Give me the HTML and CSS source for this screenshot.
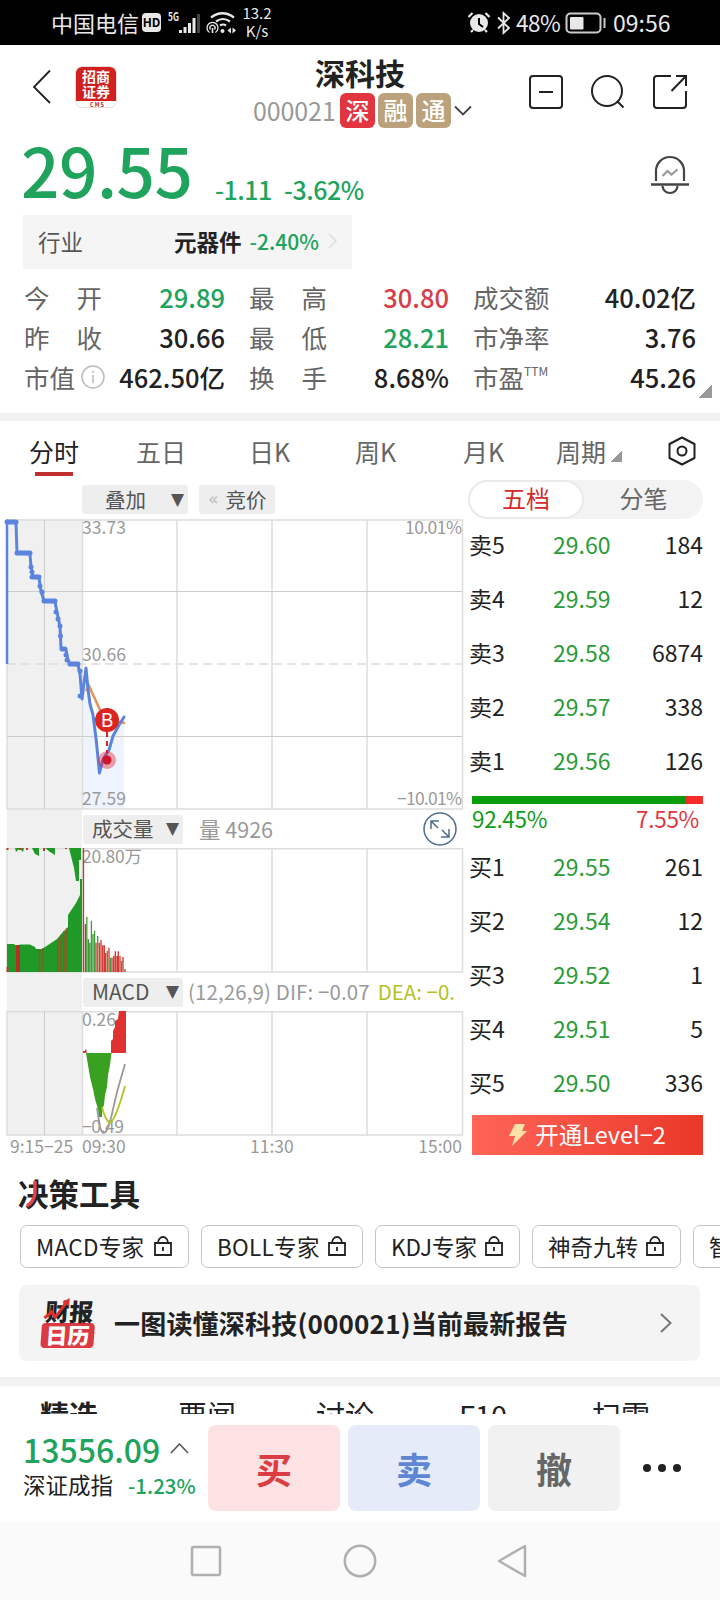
FILE: index.html
```html
<!DOCTYPE html>
<html lang="zh-CN">

<head>
  <meta charset="UTF-8">
  <meta name="viewport" content="width=device-width, initial-scale=1.0">
  <title>深科技 000021</title>
  <link rel="stylesheet" href="styles.css">
</head>

<body>
  <div class="status">
    <span class="carrier">中国电信</span>
    <span class="hd">HD</span>
    <svg class="signal" width="34" height="24" viewBox="0 0 34 24">
      <text x="0" y="10" font-size="11" font-weight="bold" fill="#e8e8e8" textLength="11" lengthAdjust="spacingAndGlyphs">5G</text>
      <g fill="#e8e8e8">
        <rect x="11" y="19" width="3" height="3" />
        <rect x="15.500" y="16" width="3" height="6" />
        <rect x="20" y="12" width="3" height="10" />
        <rect x="24.500" y="7" width="3" height="15" />
        <rect x="29" y="3" width="3" height="19" fill="#444" />
      </g>
    </svg>
    <svg class="wifi" width="31" height="24" viewBox="0 0 31 24" fill="none" stroke="#e8e8e8" stroke-width="2.200">
      <path d="M5 6.500Q16.500 -2 28 6.500" />
      <path d="M10 10.500Q17 5.500 24 10.500" />
      <path d="M14 14.500Q17 12.500 20 14.500" />
      <circle cx="16.500" cy="20" r="2" fill="#e8e8e8" stroke="none" />
      <path stroke-width="1.300" d="M3.500 21.500A5.500 5.500 0 1 1 9.500 21.500M4.500 18.500A2.600 2.600 0 1 1 8.500 18.500" />
      <path d="M6.500 17v5" stroke-width="1.600" />
      <path fill="#e8e8e8" stroke="none" d="M21.500 19.500l3.500-3v6zM30 19.500l-3.500-3v6z" />
    </svg>
    <span class="speed">13.2<br>K/s</span>
    <svg class="alarm" width="24" height="24" viewBox="0 0 24 24">
      <circle cx="12" cy="12" r="9" fill="#e8e8e8" />
      <path d="M12 7v6l4 3" fill="none" stroke="#000" stroke-width="2" />
      <path d="M1.500 6l4-4M22.500 6l-4-4M4 21l2-2M20 21l-2-2" stroke="#e8e8e8" stroke-width="2.200" />
    </svg>
    <svg class="bluetooth" width="14" height="24" viewBox="0 0 14 24" fill="none" stroke="#e8e8e8" stroke-width="1.800">
      <path d="M1 6.500l11 10.500-5.500 5V2l5.500 5L1 17.500" />
    </svg>
    <span class="percent">48%</span>
    <svg class="battery" width="42" height="24" viewBox="0 0 42 24">
      <rect x="1.500" y="2.500" width="34" height="19" rx="4" fill="none" stroke="#ccc" stroke-width="2" />
      <rect x="5" y="6" width="13.500" height="12.500" rx="1" fill="#e8e8e8" />
      <rect x="38.500" y="7" width="2" height="10" fill="#ccc" />
    </svg>
    <span class="clock">09:56</span>
  </div>

  <div class="header">
    <div class="header-left">
      <svg width="20" height="36" viewBox="0 0 20 36" fill="none" stroke="#222" stroke-width="1.800">
        <path d="M18 1.500L2 18l16 16" />
      </svg>
      <div class="logo">
        <div class="logo-name">招商<br>证券</div>
        <svg width="42" height="7" viewBox="0 0 42 7">
          <text x="14" y="5.500" font-size="5.500" font-weight="bold" fill="#c22" textLength="14">CMS</text>
        </svg>
      </div>
    </div>
    <div class="header-title">
      <h1>深科技</h1>
      <div class="code">
        <span>000021</span>
        <i class="tag red-tag">深</i>
        <i class="tag">融</i>
        <i class="tag">通</i>
        <svg width="18" height="12" viewBox="0 0 18 12" fill="none" stroke="#444" stroke-width="1.800">
          <path d="M1 1.500l8 8 8-8" />
        </svg>
      </div>
    </div>
    <div class="header-icons">
      <svg width="36" height="36" viewBox="0 0 36 36" fill="none" stroke="#222" stroke-width="2">
        <rect x="2" y="2" width="32" height="32" rx="3" />
        <path d="M11 18h14" />
      </svg>
      <svg width="36" height="36" viewBox="0 0 36 36" fill="none" stroke="#222" stroke-width="2">
        <circle cx="17" cy="17" r="15" />
        <path d="M27 27l6.500 6.500" />
      </svg>
      <svg width="36" height="36" viewBox="0 0 36 36" fill="none" stroke="#222" stroke-width="2">
        <path d="M19 2H5a3 3 0 0 0-3 3v26a3 3 0 0 0 3 3h26a3 3 0 0 0 3-3V17" />
        <path d="M24 2h10v10M34 2L19.500 17" />
      </svg>
    </div>
  </div>

  <div class="price">
    <span class="now">29.55</span>
    <span class="change">-1.11</span>
    <span class="change">-3.62%</span>
    <svg class="bell" width="40" height="40" viewBox="0 0 40 40" fill="none" stroke="#444" stroke-width="2.200">
      <path d="M6 26V16a14 14 0 0 1 28 0v10" />
      <path d="M1 29.500h38" stroke-width="2.600" />
      <path d="M12.500 31a7.500 7 0 0 0 15 0" />
      <path d="M12.500 21l5-5 4 3.500 6-5" stroke="#999" />
    </svg>
  </div>

  <div class="industry">
    <span>行业</span>
    <b>元器件</b>
    <span class="green">-2.40%</span>
    <svg width="9" height="16" viewBox="0 0 9 16" fill="none" stroke="#ddd" stroke-width="1.500">
      <path d="M1 1l7 7-7 7" />
    </svg>
  </div>

  <div class="quotes">
    <div class="label"><span>今</span><span>开</span></div>
    <div class="value green">29.89</div>
    <div class="label"><span>最</span><span>高</span></div>
    <div class="value red">30.80</div>
    <div class="label">成交额</div>
    <div class="value">40.02亿</div>
    <div class="label"><span>昨</span><span>收</span></div>
    <div class="value">30.66</div>
    <div class="label"><span>最</span><span>低</span></div>
    <div class="value green">28.21</div>
    <div class="label">市净率</div>
    <div class="value">3.76</div>
    <div class="label">市值
      <svg width="24" height="24" viewBox="0 0 24 24" fill="none" stroke="#bbb" stroke-width="1.500">
        <circle cx="12" cy="12" r="11" />
        <path d="M12 10v8M12 6v2" />
      </svg>
    </div>
    <div class="value">462.50亿</div>
    <div class="label"><span>换</span><span>手</span></div>
    <div class="value">8.68%</div>
    <div class="label ttm">市盈<sup>TTM</sup></div>
    <div class="value">45.26</div>
    <div class="corner"></div>
  </div>

  <div class="tabs">
    <span class="tab active">分时</span>
    <span class="tab">五日</span>
    <span class="tab">日K</span>
    <span class="tab">周K</span>
    <span class="tab">月K</span>
    <span class="tab">周期<i class="tri"></i></span>
    <svg width="30" height="30" viewBox="0 0 30 30" fill="none" stroke="#222" stroke-width="2">
      <path d="M15 1.500l12.500 6.500v14L15 28.500 2.500 22V8z" stroke-linejoin="round" />
      <circle cx="15" cy="15" r="4.500" />
    </svg>
  </div>

  <div class="main">
    <div class="charts">
      <div class="chart-tools">
        <div class="chip overlay">叠加 <i>▼</i></div>
        <div class="chip auction"><i>«</i>竞价</div>
      </div>

      <svg class="chart" width="468" height="291" viewBox="0 0 468 291">
        <rect x="7" y="0" width="75" height="291" fill="#f0f0f0" />
        <path d="M82 180L86 149 90 185 96 219 99.500 254 109 229 113 217 124 198V290H82z" fill="#eef3fd" />
        <g fill="none" stroke="#ddd" stroke-width="1.500">
          <path d="M7 1H462.500V290H7z" />
          <path d="M82.500 1V290M177 1V290M272 1V290M367 1V290" />
          <path d="M44.500 1V290M7 72.500H462M7 217.500H462" stroke="#ccc" stroke-width="1" />
          <path d="M7 145H462" stroke-dasharray="9 5" />
        </g>
        <g class="axis">
          <text x="82" y="15" textLength="44">33.73</text>
          <text x="462" y="15" text-anchor="end" textLength="57">10.01%</text>
          <text x="82" y="142" textLength="44">30.66</text>
          <text x="82" y="286" textLength="44">27.59</text>
          <text x="462" y="286" text-anchor="end" textLength="65">−10.01%</text>
        </g>
        <path d="M86 172L89 167 101 193 113 202 125 204" fill="none" stroke="#e0935a" stroke-width="2.500" />
        <g fill="none" stroke="#5b84dc" stroke-linejoin="round" stroke-linecap="round">
          <path d="M7 1V145" stroke-width="2.500" stroke-linecap="butt" />
          <path d="M7 2L16 4 17 34 30 35 31 48 33 58 39 59 41 72 44 82 55 83 57 93 60 108 61 129 66 131 68 141 70 145 78 146 80 155 82 180 86 149 88 170 90 185 93 196 96 219 99.500 254 103 240 109 231 113 217 119 206 124 198" stroke-width="3" />
          <path d="M7 3H16M17 34H30M32 58H39M44 82H55M62 130H65M70 145H78" stroke-width="5" />
          <path d="M31 48v.1M32 53v.1M40 67v.1M42 73v.1M56 93v.1M58 100v.1M60 107v.1M60.500 117v.1M66 136v.1M67 141v.1M80 152v.1M80 177v.1" stroke-width="5" />
        </g>
        <path d="M107 213V234" stroke="#d22" stroke-width="2" stroke-dasharray="5 4" />
        <circle cx="107" cy="241" r="9" fill="#e0182d" opacity=".4" />
        <circle cx="107" cy="241" r="4.500" fill="#d0142c" />
        <circle cx="107" cy="201" r="12" fill="#dc2420" />
        <text class="buy-mark" x="107" y="208" text-anchor="middle">B</text>
      </svg>

      <div class="chart-head">
        <div class="chip">成交量 <i>▼</i></div>
        <span class="volume">量 4926</span>
        <svg width="34" height="34" viewBox="0 0 34 34" fill="none" stroke="#4d6d8c" stroke-width="1.500">
          <circle cx="17" cy="17" r="16" />
          <path d="M8 17V9h8M8 9l7 7M26 17v8h-8M26 25l-7-7" />
        </svg>
      </div>

      <svg class="chart" width="468" height="125" viewBox="0 0 468 125">
        <rect x="7" y="0" width="75" height="125" fill="#f0f0f0" />
        <g fill="none" stroke="#ddd" stroke-width="1.500">
          <path d="M7 .7H462.500V124H7z" />
          <path d="M82.500 0V124M177 0V124M272 0V124M367 0V124" />
          <path d="M44.500 0V124" stroke="#ccc" stroke-width="1" />
        </g>
        <text class="axis" x="82" y="15" textLength="60">20.80万</text>
        <path fill="#1f9928" d="M7 124V96H14L15 97H19L20 96.500H30L35 99 36 101H42L48 97 57 91 62 85 68 79V67L72 61 76 55 80 47V31H82V124z" />
        <path fill="#1f9928" d="M7 0H15L16 4 18 2 20 1 23 4 24 0H32L35 6 39 8V0H45L50 4 55 7V0H69L71 8 74 20 76 33H79V12H81V0z" />
        <path stroke="#b33024" d="M18 97V124" stroke-width="4" />
        <path stroke="#8a5a22" d="M39.500 101V124M43 100V124M58 91V124M61 87V124M64 83V124M67 80V124" stroke-width="1.500" />
        <path stroke="#c23a2c" d="M7.500 0V2M20 0V2M27 0V2M44 0V3M66 0V1M7.500 119V124" stroke-width="2" />
        <path stroke="#d8302c" stroke-width="1.300" d="M83.500 0V124M85.400 76V124M96 94.700V124M99.300 94.700V124M101 92V124M102.700 97.300V124M104.300 97.300V124M105.700 105V124M109 99.700V124M112 109.700V124M113.700 107.700V124M115.300 103.300V124M117 108V124M118.300 103.300V124M120 108V124M123 109V124M125 121V124" />
        <path stroke="#3a9c3a" stroke-width="1.300" d="M86.800 69V124M88.400 91V124M89.800 94.700V124M91.400 72.700V124M93 86V124M94.600 82.700V124M97.700 88V124M107.300 102.700V124M110.500 109.700V124M121.600 112.700V124" />
      </svg>

      <div class="chart-head">
        <div class="chip macd">MACD <i>▼</i></div>
        <span class="params">(12,26,9) DIF: −0.07</span>
        <span class="dea">DEA: −0.</span>
      </div>

      <svg class="chart" width="468" height="125" viewBox="0 0 468 125">
        <rect x="7" y="0" width="75" height="124" fill="#f0f0f0" />
        <g fill="none" stroke="#ddd" stroke-width="1.500">
          <path d="M7 .7H462.500V124H7z" />
          <path d="M82.500 0V124M177 0V124M272 0V124M367 0V124" />
          <path d="M44.500 0V124" stroke="#ccc" stroke-width="1" />
        </g>
        <g class="axis">
          <text x="82" y="15" textLength="34">0.26</text>
          <text x="82" y="122" textLength="42">−0.49</text>
        </g>
        <path fill="#3aa021" d="M86 42H111.500L110 54 108 64 107 76 105 84 104 94 102 98V106H99L98 98 95 88 93 78 90 66 88 54z" />
        <path fill="#e03030" d="M83 42V40H85V38.500H86.500V42zM111 42V30L113 28V20L115 16V10L118 8 119 0H126V42z" />
        <path fill="none" stroke="#999" stroke-width="1.800" d="M97 97L100 116Q103 127 108 117L111 107 117 81 125 53" />
        <path fill="none" stroke="#b4c31e" stroke-width="1.800" d="M102 96Q105 109 110 112 116 108 125 75" />
      </svg>

      <div class="times">
        <span>9:15−25</span>
        <span>09:30</span>
        <span>11:30</span>
        <span>15:00</span>
      </div>
    </div>

    <div class="book">
      <div class="switch">
        <span class="on">五档</span>
        <span>分笔</span>
      </div>
      <div class="levels">
        <div class="level"><span>卖5</span><span>29.60</span><span>184</span></div>
        <div class="level"><span>卖4</span><span>29.59</span><span>12</span></div>
        <div class="level"><span>卖3</span><span>29.58</span><span>6874</span></div>
        <div class="level"><span>卖2</span><span>29.57</span><span>338</span></div>
        <div class="level"><span>卖1</span><span>29.56</span><span>126</span></div>
      </div>
      <div class="ratio"><div style="width: 92.45%"></div></div>
      <div class="ratio-text"><span>92.45%</span><span>7.55%</span></div>
      <div class="levels">
        <div class="level"><span>买1</span><span>29.55</span><span>261</span></div>
        <div class="level"><span>买2</span><span>29.54</span><span>12</span></div>
        <div class="level"><span>买3</span><span>29.52</span><span>1</span></div>
        <div class="level"><span>买4</span><span>29.51</span><span>5</span></div>
        <div class="level"><span>买5</span><span>29.50</span><span>336</span></div>
      </div>
      <div class="level2">
        <svg width="18" height="22" viewBox="0 0 18 22">
          <path fill="#ffe0a8" d="M6 0H16L13 7H18L3 22 6 12H0z" />
        </svg>
        开通Level−2
      </div>
    </div>
  </div>

  <h2>决策工具
    <svg width="14" height="30" viewBox="0 0 14 30" fill="none" stroke="#e0404a" stroke-width="3.500">
      <path d="M10 3V15Q9 24 2 28" />
    </svg>
  </h2>

  <div class="tools">
    <div class="tool macd-tool">MACD专家 <svg class="lock" viewBox="0 0 18 20"><path d="M1 7h16v12H1zM4 7a5 6 0 0 1 10 0M9 11v4" /></svg></div>
    <div class="tool boll-tool">BOLL专家 <svg class="lock" viewBox="0 0 18 20"><path d="M1 7h16v12H1zM4 7a5 6 0 0 1 10 0M9 11v4" /></svg></div>
    <div class="tool kdj-tool">KDJ专家 <svg class="lock" viewBox="0 0 18 20"><path d="M1 7h16v12H1zM4 7a5 6 0 0 1 10 0M9 11v4" /></svg></div>
    <div class="tool nine-tool">神奇九转 <svg class="lock" viewBox="0 0 18 20"><path d="M1 7h16v12H1zM4 7a5 6 0 0 1 10 0M9 11v4" /></svg></div>
    <div class="tool">智能</div>
  </div>

  <div class="report">
    <div class="report-logo">
      <div>财报</div>
      <div class="calendar">日历</div>
      <svg width="28" height="24" viewBox="0 0 28 24" fill="none" stroke="#e0302e" stroke-width="3">
        <path d="M1 20L8 14 12 19 23 3" />
        <path d="M18 4l7-4v8z" fill="#e0302e" stroke="none" />
      </svg>
    </div>
    <b>一图读懂深科技(000021)当前最新报告</b>
    <svg width="12" height="20" viewBox="0 0 12 20" fill="none" stroke="#777" stroke-width="2">
      <path d="M1 1l9.500 9L1 19" />
    </svg>
  </div>

  <div class="news">
    <span class="active">精选</span>
    <span>要闻</span>
    <span>讨论</span>
    <span>F10</span>
    <span>扫雷</span>
  </div>

  <div class="trade">
    <div class="index">
      <div class="index-value">13556.09
        <svg width="19" height="11" viewBox="0 0 19 11" fill="none" stroke="#555" stroke-width="1.600">
          <path d="M1 10l8.500-9 8.500 9" />
        </svg>
      </div>
      <div class="index-name">深证成指<span>-1.23%</span></div>
    </div>
    <div class="btn buy">买</div>
    <div class="btn sell">卖</div>
    <div class="btn cancel">撤</div>
    <div class="more"><i></i><i></i><i></i></div>
  </div>

  <div class="nav">
    <svg width="34" height="34" viewBox="0 0 34 34"><rect x="3" y="3" width="28" height="28" rx="1.500" /></svg>
    <svg width="34" height="34" viewBox="0 0 34 34"><circle cx="17" cy="17" r="15.200" /></svg>
    <svg width="34" height="34" viewBox="0 0 34 34"><path d="M2 17L28 2V32z" stroke-linejoin="round" /></svg>
  </div>
</body>

</html>
```
FILE: styles.css
```css
* {
  box-sizing: border-box;
}

body {
  margin: 0;
  width: 720px;
  height: 1600px;
  overflow: hidden;
  background-color: #fff;
  color: #222;
  font-family: "Noto Sans CJK SC", sans-serif;
  line-height: 1;
}

i {
  font-style: normal;
}

svg {
  display: block;
  flex: none;
}

.green {
  color: #20a35c;
}

.red {
  color: #d5404a;
}

/* status bar */
.status {
  display: flex;
  align-items: center;
  height: 45px;
  padding: 0 0 0 51px;
  background-color: #000;
  color: #e8e8e8;
  white-space: nowrap;
}

.carrier {
  width: 91px;
  padding-bottom: 1px;
  font-size: 22px;
}

.hd {
  width: 19px;
  height: 19px;
  margin-right: 7px;
  border-radius: 4px;
  background-color: #e8e8e8;
  color: #000;
  font-size: 12px;
  font-weight: bold;
  line-height: 18px;
  text-align: center;
}

.wifi {
  margin-left: 4px;
}

.speed {
  width: 40px;
  margin-right: 190px;
  padding-bottom: 1px;
  font-size: 15px;
  line-height: 18px;
  text-align: center;
}

.bluetooth {
  margin: 0 5px 0 6px;
}

.percent {
  width: 49px;
  padding-bottom: 1px;
  font-size: 22.500px;
  letter-spacing: -0.5px;
}

.clock {
  margin-left: 6px;
  padding-bottom: 1px;
  font-size: 23px;
}

/* title row */
.header {
  display: grid;
  grid-template-columns: 240px 240px 1fr;
  height: 95px;
}

.header-left {
  display: flex;
  align-items: flex-start;
  gap: 23px;
  padding: 24px 0 0 32px;
}

.logo {
  width: 42px;
  height: 42px;
  margin-top: -3px;
  border: 1px solid #eadada;
  border-radius: 7px;
  overflow: hidden;
}

.logo-name {
  height: 34px;
  padding-top: 2px;
  background-color: #d0201f;
  color: #fff;
  font-size: 14px;
  font-weight: bold;
  line-height: 15px;
  text-align: center;
}

h1 {
  margin: 12px 0 6px;
  font-size: 30px;
  line-height: 30px;
  text-align: center;
}

.code {
  display: flex;
  align-items: center;
  gap: 3px;
  margin-left: 13px;
  color: #999;
  font-size: 25px;
}

.code span {
  width: 84px;
  letter-spacing: -0.1px;
}

.tag {
  width: 35px;
  height: 35px;
  border-radius: 6px;
  background-color: #bba27c;
  color: #fff;
  font-size: 24px;
  font-weight: 500;
  line-height: 34px;
  text-align: center;
}

.red-tag {
  background-color: #e23540;
}

.header-icons {
  display: flex;
  gap: 26px;
  padding: 29px 0 0 48px;
}

/* price */
.price {
  display: flex;
  align-items: flex-end;
  height: 65px;
  padding-left: 21px;
  color: #20a35c;
}

.now {
  width: 194px;
  padding-bottom: 3px;
  font-size: 67.500px;
  font-weight: 500;
  letter-spacing: -0.5px;
  line-height: 67px;
}

.change {
  width: 69px;
  font-size: 25px;
  font-weight: 500;
  letter-spacing: -0.5px;
  line-height: 31px;
}

.bell {
  margin: 0 0 10px 297px;
}

.industry {
  display: flex;
  align-items: center;
  width: 329px;
  height: 54px;
  margin: 10px 0 0 23px;
  padding: 0 15px 2px;
  background-color: #f5f5f5;
  color: #555;
  font-size: 22.500px;
}

.industry b {
  margin: 0 8px 0 auto;
  color: #222;
}

.industry .green {
  margin-right: 9px;
  font-size: 21px;
  font-weight: 500;
}

.quotes {
  position: relative;
  display: grid;
  grid-template-columns: 78px 123px 102px 122px 114px 133px;
  grid-auto-rows: 40px;
  align-items: center;
  height: 144px;
  padding: 8px 0 0 24px;
  font-size: 25.500px;
  white-space: nowrap;
}

.label {
  display: flex;
  justify-content: space-between;
  align-items: center;
  color: #666;
}

.label:nth-child(6n + 3),
.label:nth-child(6n + 5) {
  padding-left: 24px;
}

.label svg {
  margin-right: -3px;
}

.label.ttm {
  justify-content: flex-start;
}

.ttm sup {
  align-self: flex-start;
  margin-top: 1px;
  font-size: 12px;
}

.value {
  font-weight: 500;
  text-align: right;
}

.corner {
  position: absolute;
  right: 8px;
  bottom: 15px;
  width: 13px;
  height: 13px;
  background: linear-gradient(135deg, transparent 50%, #999 50%);
}

/* period tabs */
.tabs {
  display: grid;
  grid-template-columns: 107px 113px 106px 108px 93px 111px 1fr;
  height: 72px;
  padding: 13px 0 0 29px;
  border-top: 8px solid #f2f2f2;
  color: #666;
  font-size: 25px;
  line-height: 34px;
}

.tabs svg {
  margin-top: 2px;
}

.tab.active {
  color: #222;
}

.tab.active::after {
  content: "";
  display: block;
  width: 38px;
  height: 4px;
  margin: 4px 0 0 6px;
  background-color: #c02e2e;
}

.tri {
  display: inline-block;
  width: 11px;
  height: 11px;
  margin-left: 5px;
  background: linear-gradient(135deg, transparent 50%, #999 50%);
}

/* charts */
.main {
  display: flex;
  height: 676px;
}

.charts {
  width: 468px;
  font-size: 20px;
}

.chart-tools {
  display: flex;
  gap: 11px;
  height: 34px;
  padding-left: 82px;
}

.chip {
  display: flex;
  align-items: center;
  width: 100px;
  height: 29px;
  padding: 0 0 1px 9px;
  border-radius: 3px;
  background-color: #eee;
  color: #555;
  font-size: 20.500px;
}

.chip i {
  margin-left: auto;
  margin-right: 4px;
  font-family: "DejaVu Sans", sans-serif;
  font-size: 17px;
}

.macd {
  font-size: 21px;
}

.chip.overlay {
  width: 106px;
  padding-left: 23px;
}

.chip.auction {
  width: 76px;
}

.chip.auction i {
  margin: 0 7px 0 0;
  color: #bbb;
}

.axis {
  fill: #999;
  font-size: 17.500px;
}

.buy-mark {
  fill: #fff;
  font-size: 19px;
}

.chart-head {
  display: flex;
  align-items: center;
  height: 38px;
  padding: 0 11px 0 83px;
  background: linear-gradient(to right, #fff 7px, #f0f0f0 7px, #f0f0f0 82px, #fff 82px);
  color: #999;
  white-space: nowrap;
}

.volume {
  margin: 0 auto 0 16px;
  font-size: 21.500px;
}

.params {
  margin-left: 5px;
  padding-bottom: 2px;
  font-size: 20.500px;
  letter-spacing: 0.1px;
}

.dea {
  margin-left: 8px;
  padding-bottom: 2px;
  font-size: 20.500px;
  color: #b4bf1e;
}

.times {
  display: grid;
  grid-template-columns: 72px 168px 1fr auto;
  padding: 1px 6px 0 10px;
  color: #999;
  font-size: 17.500px;
}

/* order book */
.book {
  width: 235px;
  margin-top: -5px;
}

.switch {
  display: flex;
  height: 39px;
  border-radius: 20px;
  background-color: #f3f3f3;
  color: #666;
  font-size: 24px;
  line-height: 36px;
  text-align: center;
}

.switch span {
  flex: 1;
}

.switch .on {
  flex: none;
  width: 116px;
  border: 2px solid #eaeaea;
  border-radius: 20px;
  background-color: #fff;
  color: #d52b2b;
  line-height: 32px;
}

.level {
  display: grid;
  grid-template-columns: 84px 70px 1fr;
  align-items: center;
  height: 54px;
  padding: 0 0 4px 1px;
  font-size: 23px;
}

.level span:nth-child(2) {
  color: #2a9c3a;
}

.level span:nth-child(3) {
  text-align: right;
}

.ratio {
  height: 8px;
  margin: 7px 0 0 4px;
  background-color: #f82b2b;
}

.ratio div {
  height: 8px;
  background-color: #0a9c0a;
}

.ratio-text {
  display: flex;
  justify-content: space-between;
  height: 37px;
  padding: 3px 4px 0 4px;
  color: #e0353c;
  font-size: 22.500px;
}

.ratio-text span {
  letter-spacing: -0.3px;
}

.ratio-text span:first-child {
  color: #0f9c1a;
}

.level2 {
  display: flex;
  justify-content: center;
  align-items: center;
  gap: 8px;
  height: 40px;
  margin: 4px 0 0 4px;
  background: linear-gradient(to right, #ff6558, #ea3829);
  color: #fff;
  font-size: 23.500px;
}

/* tools */
h2 {
  position: relative;
  margin: 16px 0 0 18px;
  font-size: 30.500px;
  line-height: 32px;
}

h2 svg {
  position: absolute;
  left: 7px;
  top: 1px;
}

.tools {
  display: flex;
  gap: 12px;
  margin-top: 16px;
  padding-left: 20px;
  overflow: hidden;
  white-space: nowrap;
}

.tool {
  display: flex;
  flex: none;
  align-items: center;
  justify-content: space-between;
  height: 43px;
  padding: 0 16px 1px 15px;
  border: 1px solid #c4c4c4;
  border-radius: 7px;
  font-size: 22.500px;
}

.macd-tool {
  width: 169px;
  letter-spacing: 0.3px;
}

.boll-tool {
  width: 162px;
  letter-spacing: 0.3px;
}

.kdj-tool {
  width: 145px;
}

.nine-tool {
  width: 149px;
}

.lock {
  width: 18px;
  height: 20px;
  fill: none;
  stroke: #222;
  stroke-width: 1.800;
}

.report {
  display: flex;
  align-items: center;
  width: 681px;
  height: 76px;
  margin: 17px 0 16px 19px;
  padding: 0 28px 0 23px;
  border-radius: 8px;
  background-color: #f4f4f4;
  font-size: 26px;
}

.report > b {
  margin: 0 auto 0 19px;
  letter-spacing: 0.2px;
  white-space: nowrap;
}

.report-logo {
  position: relative;
  width: 53px;
  font-size: 24px;
  font-weight: 900;
  line-height: 25px;
  text-align: center;
  transform: skewX(-4deg);
}

.calendar {
  height: 25px;
  border-radius: 4px;
  background-color: #db3a42;
  color: #fff;
  font-size: 22px;
  line-height: 23px;
}

.report-logo svg {
  position: absolute;
  left: 1px;
  top: 0;
}

.news {
  display: grid;
  grid-template-columns: repeat(5, 138px);
  height: 37px;
  padding-top: 11px;
  overflow: hidden;
  border-top: 9px solid #f2f2f2;
  font-size: 29px;
  line-height: 34px;
  text-align: center;
}

.news .active {
  font-weight: bold;
}

/* trade bar */
.trade {
  display: flex;
  height: 108px;
  gap: 8px;
  padding: 11px 0 0 23px;
  background-color: #fff;
}

.index {
  width: 177px;
  white-space: nowrap;
}

.index-value {
  display: flex;
  align-items: center;
  gap: 10px;
  height: 47px;
  color: #20a35c;
  font-size: 32px;
  font-weight: 500;
}

.index-name {
  height: 24px;
  font-size: 22.500px;
  line-height: 24px;
}

.index-name span {
  margin-left: 15px;
  color: #20a35c;
  font-size: 20.500px;
  font-weight: 500;
}

.btn {
  width: 132px;
  height: 86px;
  border-radius: 8px;
  font-size: 36px;
  font-weight: bold;
  line-height: 87px;
  text-align: center;
}

.buy {
  background-color: #fce2e2;
  color: #dc3d45;
}

.sell {
  background-color: #e5ebf9;
  color: #5f86d2;
}

.cancel {
  background-color: #f1f1f1;
  color: #666;
}

.more {
  display: flex;
  gap: 7px;
  padding: 39px 0 0 15px;
}

.more i {
  width: 8px;
  height: 8px;
  border-radius: 50%;
  background-color: #222;
}

/* system navigation */
.nav {
  display: flex;
  justify-content: center;
  gap: 120px;
  height: 80px;
  padding-top: 22px;
  background-color: #fafafa;
}

.nav svg {
  fill: none;
  stroke: #b0b0b0;
  stroke-width: 2.500;
}
```
